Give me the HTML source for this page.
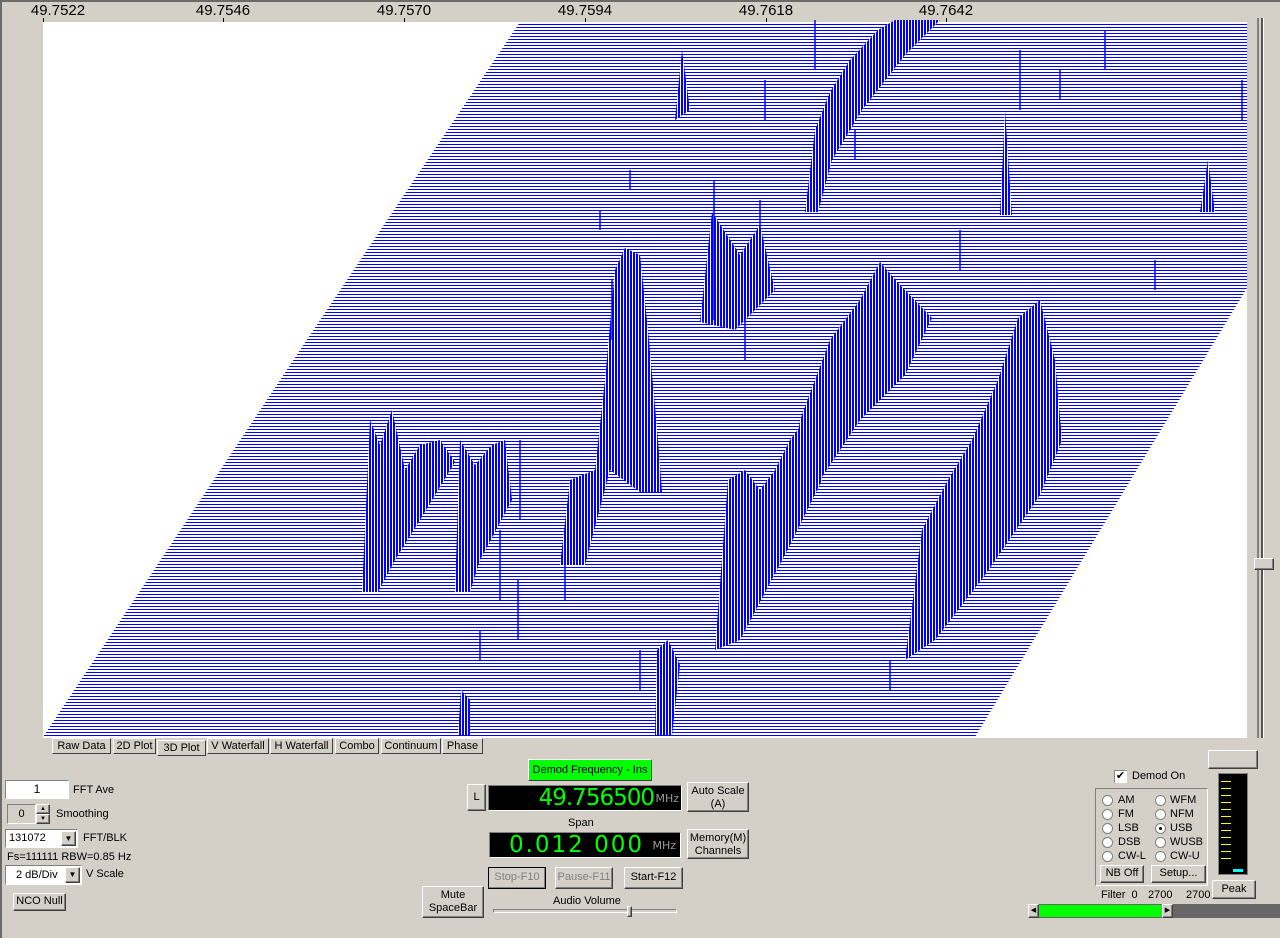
<!DOCTYPE html>
<html><head><meta charset="utf-8"><style>
body{margin:0;width:1280px;height:938px;background:#d4d0c8;font-family:"Liberation Sans",sans-serif;font-size:11px;color:#000;position:relative;overflow:hidden}
.a{position:absolute}
.btn{position:absolute;background:#d4d0c8;border:1px solid;border-color:#fff #404040 #404040 #fff;box-shadow:inset -1px -1px 0 #808080;text-align:center;font-size:11px;line-height:13px;box-sizing:border-box}
.sunk{position:absolute;border:1px solid;border-color:#808080 #fff #fff #808080;box-sizing:border-box}
.lbl{position:absolute;font-size:11px;white-space:nowrap}
.tab{position:absolute;top:738px;height:16px;background:#d4d0c8;border:1px solid;border-color:#fff #404040 #404040 #fff;font-size:11px;line-height:14px;text-align:center;box-sizing:border-box}
.rad{position:absolute;width:11px;height:11px;border-radius:50%;background:#fff;border:1px solid #808080;box-sizing:border-box}
.disp{position:absolute;background:#000;border:1px solid;border-color:#808080 #fff #fff #808080;box-sizing:border-box;color:#0f0;font-family:"DejaVu Sans","Liberation Sans",sans-serif}
</style></head><body>
<div class="a" style="left:0;top:0;width:1280px;height:2px;background:#6a6a6a"></div>
<div class="a" style="left:0;top:0;width:2px;height:938px;background:#6a6a6a"></div>
<svg class="a" style="left:0;top:0" width="1280" height="738">
<defs>
<pattern id="h" width="4" height="3" patternUnits="userSpaceOnUse"><rect width="4" height="3" fill="#fff"/><rect width="4" height="1" fill="#0000ff"/></pattern>
<pattern id="v" width="3" height="3" patternUnits="userSpaceOnUse"><rect width="3" height="3" fill="#fff"/><rect width="2" height="3" fill="#0000ff"/></pattern>
</defs>
<g font-family="Liberation Sans" font-size="15" text-anchor="middle" fill="#000">
<text x="58" y="15">49.7522</text><text x="223" y="15">49.7546</text><text x="404" y="15">49.7570</text><text x="585" y="15">49.7594</text><text x="766" y="15">49.7618</text><text x="946" y="15">49.7642</text>
</g>
<rect x="43" y="22" width="1204" height="716" fill="#fff"/>
<g stroke="#000"><path d="M43.5 18v4M223.5 18v4M404.5 18v4M585.5 18v4M766.5 18v4M946.5 18v4"/></g>
<polygon points="520,22 1247,22 1247,288 975,737 43,737 300,350" fill="url(#h)"/>
<g fill="url(#v)">
<polygon points="362,592 370,420 380,445 392,410 405,470 420,445 440,440 455,462 420,520 395,560 378,592"/>
<polygon points="455,592 460,440 475,465 492,445 505,440 512,500 480,560 470,592"/>
<polygon points="560,565 570,480 595,470 605,380 615,270 625,248 640,255 648,330 658,440 662,492 640,492 610,470 585,565"/>
<polygon points="715,650 728,480 745,470 760,490 775,470 790,440 805,420 822,480 790,545 740,640"/>
<polygon points="780,560 800,420 830,340 860,300 880,262 900,285 932,318 905,375 860,420 820,480"/>
<polygon points="905,660 922,530 948,480 972,440 998,380 1018,318 1040,300 1055,360 1062,440 1040,495 985,575 935,640"/>
<polygon points="805,212 815,130 830,92 850,60 878,30 895,20 940,20 905,55 862,110 832,160 818,212"/>
<polygon points="655,735 657,650 668,640 680,665 672,735"/>
<polygon points="458,735 461,690 470,700 470,735"/>
<polygon points="700,322 712,212 740,255 760,225 775,290 735,330"/>
<polygon points="675,120 682,50 690,110"/>
<polygon points="1200,212 1208,160 1215,212"/>
<polygon points="1000,215 1005,110 1012,215"/>
</g>
<g stroke="#00f" stroke-width="1.5">
<path d="M518 640v-60M500 600v-70M520 520v-80M565 600v-60M612 340v-60M760 280v-80M714 320v-140M745 360v-60M960 270v-40M1155 290v-30M1105 70v-40M1242 120v-40M1020 110v-60M765 120v-40M815 70v-50M600 230v-20M630 190v-20M855 160v-30M640 690v-40M480 660v-30M890 690v-30M1060 100v-30"/>
</g>
<rect x="1257" y="18" width="2" height="720" fill="#808080"/>
<rect x="1261" y="18" width="2" height="720" fill="#555"/>
<rect x="1263" y="18" width="1" height="720" fill="#fff"/>
</svg>
<div class="btn" style="left:1254px;top:558px;width:20px;height:12px"></div>

<div class="tab" style="left:52px;width:59px">Raw Data</div>
<div class="tab" style="left:113px;width:43px">2D Plot</div>
<div class="tab" style="left:157px;width:49px;top:740px">3D Plot</div>
<div class="tab" style="left:207px;width:62px">V Waterfall</div>
<div class="tab" style="left:270px;width:63px">H Waterfall</div>
<div class="tab" style="left:335px;width:44px">Combo</div>
<div class="tab" style="left:381px;width:60px">Continuum</div>
<div class="tab" style="left:442px;width:41px">Phase</div>

<div class="sunk" style="left:5px;top:780px;width:64px;height:19px;background:#fff;text-align:center;line-height:17px;font-size:12px">1</div>
<div class="lbl" style="left:73px;top:784px">FFT Ave</div>
<div class="sunk" style="left:7px;top:804px;width:29px;height:20px;text-align:center;line-height:18px">0</div>
<div class="btn" style="left:36px;top:804px;width:14px;height:10px;font-size:6px;line-height:8px">▲</div>
<div class="btn" style="left:36px;top:814px;width:14px;height:10px;font-size:6px;line-height:8px">▼</div>
<div class="lbl" style="left:56px;top:808px">Smoothing</div>
<div class="sunk" style="left:5px;top:829px;width:73px;height:19px;background:#fff;line-height:17px;padding-left:3px">131072</div>
<div class="btn" style="left:61px;top:831px;width:15px;height:15px;font-size:8px;line-height:13px">▼</div>
<div class="lbl" style="left:83px;top:832px">FFT/BLK</div>
<div class="lbl" style="left:7px;top:851px">Fs=111111 RBW=0.85 Hz</div>
<div class="sunk" style="left:5px;top:865px;width:77px;height:20px;background:#fff;line-height:18px;padding-left:10px">2 dB/Div</div>
<div class="btn" style="left:65px;top:867px;width:15px;height:16px;font-size:8px;line-height:14px">▼</div>
<div class="lbl" style="left:86px;top:868px">V Scale</div>
<div class="btn" style="left:13px;top:893px;width:53px;height:18px;line-height:15px">NCO Null</div>

<div class="a" style="left:528px;top:759px;width:124px;height:22px;background:#00ff00;border:1px solid;border-color:#fff #404040 #404040 #fff;box-sizing:border-box;text-align:center;line-height:20px">Demod Frequency - Ins</div>
<div class="btn" style="left:467px;top:784px;width:19px;height:27px;line-height:25px">L</div>
<div class="disp" style="left:488px;top:785px;width:194px;height:26px"><span class="a" style="right:27px;top:-1px;font-size:23px;letter-spacing:-1px">49.756500</span><span class="a" style="right:2px;top:6px;font-size:11px;color:#9a9a9a">MHz</span></div>
<div class="btn" style="left:687px;top:782px;width:62px;height:30px;padding-top:2px">Auto Scale<br>(A)</div>
<div class="lbl" style="left:568px;top:817px">Span</div>
<div class="disp" style="left:489px;top:832px;width:192px;height:26px"><span class="a" style="right:36px;top:-1px;font-size:23px;letter-spacing:2px">0.012 000</span><span class="a" style="right:4px;top:6px;font-size:11px;color:#9a9a9a">MHz</span></div>
<div class="btn" style="left:687px;top:829px;width:62px;height:30px;padding-top:2px">Memory(M)<br>Channels</div>
<div class="btn" style="left:488px;top:867px;width:58px;height:22px;line-height:19px;color:#808080;border:1px solid #000">Stop-F10</div>
<div class="btn" style="left:555px;top:867px;width:58px;height:22px;line-height:19px;color:#808080">Pause-F11</div>
<div class="btn" style="left:624px;top:867px;width:59px;height:22px;line-height:19px">Start-F12</div>
<div class="btn" style="left:422px;top:886px;width:62px;height:32px;padding-top:2px">Mute<br>SpaceBar</div>
<div class="lbl" style="left:553px;top:895px">Audio Volume</div>
<div class="sunk" style="left:493px;top:909px;width:184px;height:4px"></div>
<div class="btn" style="left:627px;top:906px;width:5px;height:11px"></div>

<div class="btn" style="left:1208px;top:750px;width:50px;height:19px"></div>
<div class="sunk" style="left:1114px;top:770px;width:13px;height:13px;background:#fff;font-size:11px;line-height:11px;text-align:center">✔</div>
<div class="lbl" style="left:1132px;top:770px">Demod On</div>
<div class="a" style="left:1095px;top:788px;width:113px;height:98px;border:1px solid;border-color:#808080 #fff #fff #808080;box-sizing:border-box"></div>
<div class="rad" style="left:1102px;top:795px"></div><div class="lbl" style="left:1118px;top:794px">AM</div>
<div class="rad" style="left:1102px;top:809px"></div><div class="lbl" style="left:1118px;top:808px">FM</div>
<div class="rad" style="left:1102px;top:823px"></div><div class="lbl" style="left:1118px;top:822px">LSB</div>
<div class="rad" style="left:1102px;top:837px"></div><div class="lbl" style="left:1118px;top:836px">DSB</div>
<div class="rad" style="left:1102px;top:851px"></div><div class="lbl" style="left:1118px;top:850px">CW-L</div>
<div class="rad" style="left:1155px;top:795px"></div><div class="lbl" style="left:1170px;top:794px">WFM</div>
<div class="rad" style="left:1155px;top:809px"></div><div class="lbl" style="left:1170px;top:808px">NFM</div>
<div class="rad" style="left:1155px;top:823px"><div class="a" style="left:3px;top:3px;width:3px;height:3px;background:#000;border-radius:50%"></div></div><div class="lbl" style="left:1170px;top:822px">USB</div>
<div class="rad" style="left:1155px;top:837px"></div><div class="lbl" style="left:1170px;top:836px">WUSB</div>
<div class="rad" style="left:1155px;top:851px"></div><div class="lbl" style="left:1170px;top:850px">CW-U</div>
<div class="btn" style="left:1100px;top:865px;width:44px;height:18px;line-height:15px">NB Off</div>
<div class="btn" style="left:1151px;top:865px;width:55px;height:18px;line-height:15px">Setup...</div>
<div class="lbl" style="left:1101px;top:889px">Filter&nbsp; 0</div>
<div class="lbl" style="left:1148px;top:889px">2700</div>
<div class="lbl" style="left:1186px;top:889px">2700</div>
<svg class="a" style="left:1218px;top:773px" width="30" height="102"><rect width="30" height="102" fill="#808080"/><rect x="1" y="1" width="28" height="100" fill="#000"/><g stroke="#ff0" stroke-width="1"><path d="M3 8.5h10M3 15.5h10M3 22.5h10M3 29.5h10M3 36.5h10M3 43.5h10M3 50.5h10M3 57.5h10M3 64.5h10M3 71.5h10M3 78.5h10M3 85.5h10"/></g><rect x="15" y="96" width="10" height="3" fill="#0ff"/></svg>
<div class="btn" style="left:1212px;top:880px;width:44px;height:19px;line-height:17px">Peak</div>
<div class="a" style="left:1028px;top:904px;width:252px;height:14px;background:#666"></div>
<div class="btn" style="left:1028px;top:904px;width:11px;height:14px;font-size:7px;line-height:12px">◀</div>
<div class="a" style="left:1039px;top:905px;width:123px;height:12px;background:#00ff00"></div>
<div class="btn" style="left:1162px;top:904px;width:11px;height:14px;font-size:7px;line-height:12px">▶</div>
</body></html>
